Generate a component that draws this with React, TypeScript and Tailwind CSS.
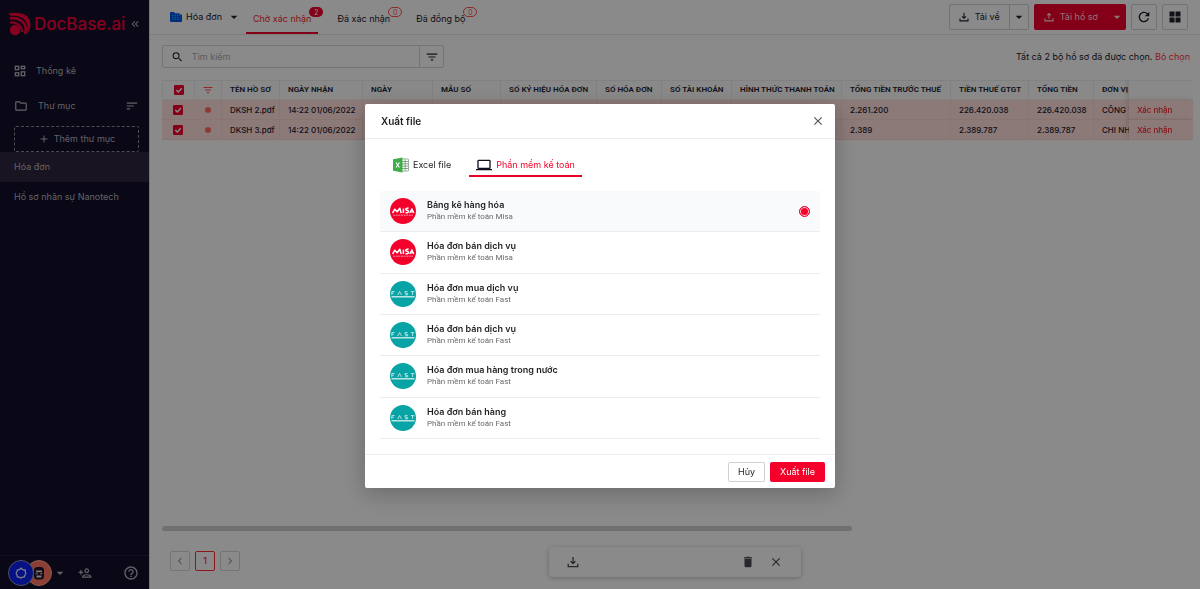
import { useState } from "react";
import type { ReactNode } from "react";
import {
  MdAdd,
  MdArrowDropDown,
  MdClose,
  MdDelete,
  MdFilterList,
  MdHelpOutline,
  MdOutlineFolder,
  MdOutlinePersonAdd,
  MdRefresh,
  MdSearch,
  MdSort,
  MdChevronLeft,
  MdChevronRight,
  MdKeyboardDoubleArrowLeft,
  MdLaptop,
} from "react-icons/md";

function BrandMark() {
  return (
    <svg viewBox="0 0 22 24" className="h-6 w-6 shrink-0" fill="none" aria-hidden="true">
      <circle cx="6" cy="18" r="5.2" fill="#f5003a" />
      <path d="M1 10.500c7-.8 12 3.500 12 9.500" stroke="#f5003a" strokeWidth="2.200" />
      <path d="M1 6.300c9.500-1 15.800 4.200 15.800 11.200 0 2-.5 3.500-1.200 4.500" stroke="#f5003a" strokeWidth="2.600" />
      <path d="M0 2V1h8c8 0 13.500 4.200 13.500 11.500 0 4-1.600 7.500-4.500 10 1.500-3.500 2-6.500 1.200-9.500C16.800 7.500 12 3.800 5 3.800H1.500Z" fill="#f5003a" />
    </svg>
  );
}

function DashboardIcon() {
  return (
    <svg viewBox="0 0 12 12" className="size-3" fill="none" stroke="currentColor" strokeWidth="1.300" aria-hidden="true">
      <rect x="1.300" y="1.300" width="3.400" height="3.400" />
      <rect x="7.300" y="1.300" width="3.400" height="2.400" />
      <rect x="1.300" y="7.800" width="3.400" height="2.900" />
      <rect x="7.300" y="6.800" width="3.400" height="3.900" />
    </svg>
  );
}

function TrayIcon({ className }: { className: string }) {
  return (
    <svg viewBox="0 0 12 12" className={className} fill="none" stroke="currentColor" strokeWidth="1.300" aria-hidden="true">
      <path d="M6 1v6.500M3.600 5.200 6 7.600l2.400-2.400M1.200 7.800v2.800h9.600V7.800" />
    </svg>
  );
}

function UploadIcon({ className }: { className: string }) {
  return (
    <svg viewBox="0 0 12 12" className={className} fill="none" stroke="currentColor" strokeWidth="1.300" aria-hidden="true">
      <path d="M6 8V2M4 3.900l2-2 2 2M1.200 7.500v3.100h9.600V7.500" />
    </svg>
  );
}

function BlueFolder() {
  return (
    <svg viewBox="0 0 12 10" className="h-2.5 w-3" aria-hidden="true">
      <path d="M0 1.200C0 .5.500 0 1.200 0h2.600l1.200 1.200h4.500v1.300H12V9c0 .6-.4 1-1 1H1.200C.5 10 0 9.500 0 8.800Z" fill="#0050e0" />
      <path d="M2 3.300h8.500M2 5.300h8.500M2 7.300h8.500" stroke="#00b4ff" strokeWidth="1" strokeDasharray="1.500 1" />
    </svg>
  );
}

function ExcelIcon() {
  return (
    <svg viewBox="0 0 16 15" className="h-4 w-4" aria-hidden="true">
      <rect x="8" y="1.500" width="7.500" height="12" rx=".6" fill="#fff" stroke="#6f8a74" strokeWidth=".7" />
      <path d="M9 4h6M9 6.300h6M9 8.600h6M9 11h6M12.200 2v11" stroke="#6f8a74" strokeWidth=".8" />
      <path d="M0 1.800 9.500 0v15L0 13.200Z" fill="#3fae49" />
      <path d="m3 5 3.400 5M6.400 5 3 10" stroke="#fff" strokeWidth="1.100" />
    </svg>
  );
}

function MisaLogo() {
  return (
    <svg viewBox="0 0 26 26" className="size-6.5 shrink-0" role="img" aria-label="Misa">
      <circle cx="13" cy="13" r="13" fill="#f3002b" />
      <g fill="none" stroke="#fff" strokeWidth="1.500" strokeLinejoin="round">
        <path d="m2.600 15 2.200-3.800 2.400 2.600 2.600-3.600 1.400 4.800" />
        <path d="M13.400 10.600V15" />
        <path d="M18.600 10c-1.800 0-3 .7-2.800 1.500.2.900 2.700.8 2.700 2.100 0 1-1.500 1.400-3 1.200" />
        <path d="m19.700 15 2.200-4.200 1.900 4.200M20.500 13.800h2.600" strokeWidth="1.300" />
      </g>
      <path d="M3.200 17.200h19.800" stroke="#fff" strokeOpacity=".7" strokeWidth=".8" strokeDasharray="2 .6" />
    </svg>
  );
}

function FastLogo() {
  return (
    <svg viewBox="0 0 26 26" className="size-6.5 shrink-0" role="img" aria-label="Fast">
      <circle cx="13" cy="13" r="13" fill="#08a3a4" />
      <g fill="none" stroke="#d4f3f3" strokeWidth=".8">
        <path d="M1.800 14v-3.500h2.800M1.800 12.200h2" />
        <path d="m7.700 14 1.900-3.500 1.900 3.500" />
        <path d="M17.600 10.600h-2.600v1.400l2.700.6v1.200h-2.900" />
        <path d="M20.800 10.600h3.600M22.600 10.600V14" />
      </g>
      <circle cx="9.600" cy="12.800" r=".7" fill="#f05050" />
      <path d="M1.500 15.800h23" stroke="#fff" strokeOpacity=".85" strokeWidth="1.300" />
    </svg>
  );
}

type Status = { label: string; count: number };
const statuses: Status[] = [
  { label: "Chờ xác nhận", count: 2 },
  { label: "Đã xác nhận", count: 0 },
  { label: "Đã đồng bộ", count: 0 },
];

const columns = [
  { label: "TÊN HỒ SƠ", width: "w-[58px]" },
  { label: "NGÀY NHẬN", width: "w-[83px]" },
  { label: "NGÀY", width: "w-[70px]" },
  { label: "MẪU SỐ", width: "w-[68px]" },
  { label: "SỐ KÝ HIỆU HÓA ĐƠN", width: "w-[96px]" },
  { label: "SỐ HÓA ĐƠN", width: "w-[65px]" },
  { label: "SỐ TÀI KHOẢN", width: "w-[70px]" },
  { label: "HÌNH THỨC THANH TOÁN", width: "w-[110px]" },
  { label: "TỔNG TIỀN TRƯỚC THUẾ", width: "w-[109px]" },
  { label: "TIỀN THUẾ GTGT", width: "w-[78px]" },
  { label: "TỔNG TIỀN", width: "w-[65px]" },
  { label: "ĐƠN VỊ", width: "w-[460px]" },
];

const rows = [
  ["DKSH 2.pdf", "14:22 01/06/2022", "", "", "", "", "", "", "2.261.200", "226.420.038", "226.420.038", "CÔNG T"],
  ["DKSH 3.pdf", "14:22 01/06/2022", "", "", "", "", "", "", "2.389", "2.389.787", "2.389.787", "CHI NHÁ"],
];

const templates = [
  { name: "Bảng kê hàng hóa", vendor: "Misa" },
  { name: "Hóa đơn bán dịch vụ", vendor: "Misa" },
  { name: "Hóa đơn mua dịch vụ", vendor: "Fast" },
  { name: "Hóa đơn bán dịch vụ", vendor: "Fast" },
  { name: "Hóa đơn mua hàng trong nước", vendor: "Fast" },
  { name: "Hóa đơn bán hàng", vendor: "Fast" },
];

function RowCheckbox({ label }: { label: string }) {
  return (
    <label className="relative mx-auto flex size-2.5 items-center justify-center">
      <input type="checkbox" defaultChecked aria-label={label} className="peer size-2.5 appearance-none rounded-[1px] border border-[#f0002c] bg-white checked:bg-[#f0002c]" />
      <svg viewBox="0 0 10 10" className="pointer-events-none absolute inset-0 hidden size-2.5 peer-checked:block" fill="none" stroke="#fff" strokeWidth="1.400" aria-hidden="true">
        <path d="m2.300 5 2 2 3.500-3.800" />
      </svg>
    </label>
  );
}

function Sidebar() {
  return (
    <aside className="flex w-[150px] shrink-0 flex-col border-r border-[#d8d8dc] bg-[#130d28] text-[#b5b4bb]">
      <div className="flex items-center gap-0.5 pt-3 pr-2 pl-2">
        <BrandMark />
        <span className="text-[17px] leading-6 font-medium text-[#f5003a]">DocBase.ai</span>
        <button type="button" aria-label="Thu gọn" className="ml-auto">
          <MdKeyboardDoubleArrowLeft className="size-3" />
        </button>
      </div>
      <nav className="mt-5 flex flex-1 flex-col">
        <a href="#stats" className="flex h-7.5 items-center gap-2.5 px-3.5">
          <DashboardIcon />
          Thống kê
        </a>
        <div className="mt-1 flex h-8 items-center gap-2.5 pr-2.5 pl-3.5">
          <MdOutlineFolder className="size-3.5" />
          <span>Thư mục</span>
          <button type="button" aria-label="Sắp xếp" className="ml-auto">
            <MdSort className="size-3.5" />
          </button>
        </div>
        <button type="button" className="mt-1 mr-2.5 ml-3.5 flex h-6.5 items-center justify-center gap-1 rounded-xs border border-dashed border-[#8d8a94]">
          <MdAdd className="size-3" />
          Thêm thư mục
        </button>
        <a href="#invoices" className="flex h-7.5 items-center bg-[#2f253c] px-3.5">Hóa đơn</a>
        <a href="#hr" className="flex h-7.5 items-center px-3.5">Hồ sơ nhân sự Nanotech</a>
      </nav>
      <div className="flex h-8.5 items-center border-t border-[#241f38] px-2">
        <span className="relative z-10 flex size-6.5 items-center justify-center rounded-full border border-[#8e93b8] bg-[#0b21f0]">
          <svg viewBox="0 0 12 12" className="size-3" fill="none" stroke="#fff" strokeWidth="1.100" strokeLinejoin="round" aria-hidden="true">
            <path d="m6 1 1.500 1.600 2.700.3.100 2.300L11 6.500 9.800 8.200l-.5 1.800-2 .1L6 11.200l-1.600-1.100-2.100-.2-.3-1.900L1 6.300l1-1.500.3-1.900 2.100-.3Z" />
          </svg>
        </span>
        <span className="-ml-2 flex size-6.5 items-center justify-center rounded-full border border-[#ffa08c] bg-[#ff7562]">
          <svg viewBox="0 0 12 14" className="h-3.5 w-3" aria-hidden="true">
            <rect x="1" y="1" width="10" height="12.500" rx="3.500" fill="#1c1028" />
            <path d="M3 4.500h6v1.700H3zM3.500 9.500h5v2h-5z" fill="#f0d8d0" />
            <path d="M2.500 7.800h2.300M7.200 7.800h2.300" stroke="#f0d8d0" />
          </svg>
        </span>
        <button type="button" aria-label="Đổi tài khoản">
          <MdArrowDropDown className="size-4" />
        </button>
        <button type="button" aria-label="Mời thành viên" className="ml-2.5">
          <MdOutlinePersonAdd className="size-3.5" />
        </button>
        <button type="button" aria-label="Trợ giúp" className="mr-0.5 ml-auto">
          <MdHelpOutline className="size-4" />
        </button>
      </div>
    </aside>
  );
}

function TopBar() {
  return (
    <header className="flex h-[35px] items-center border-b border-[#e4e4e4] pr-3 pl-5">
      <button type="button" className="flex items-center gap-1">
        <BlueFolder />
        <span>Hóa đơn</span>
        <MdArrowDropDown className="size-4" />
      </button>
      <nav className="ml-1 flex items-stretch gap-3 self-stretch">
        {statuses.map((s, i) => (
          <a
            key={s.label}
            href="#status"
            className={i === 0 ? "flex items-center border-b-2 border-[#f0002c] px-[7px] pt-1.5 text-[#f5222d]" : "flex items-center border-b-2 border-transparent px-[7px] pt-1.5"}
          >
            <span className="relative">
              {s.label}
              <span
                className={
                  i === 0
                    ? "absolute -top-1.5 left-full -ml-0.5 flex h-2.5 w-3.5 items-center justify-center rounded-full bg-[#f0002c] text-[7px] leading-none text-white"
                    : "absolute -top-1.5 left-full -ml-0.5 flex h-2.5 w-3.5 items-center justify-center rounded-full border border-[#ff4d4f] text-[7px] leading-none text-[#ff4d4f]"
                }
              >
                {s.count}
              </span>
            </span>
          </a>
        ))}
      </nav>
      <div className="ml-auto flex items-center gap-[5px]">
        <div className="flex h-6.5 rounded-xs border border-[#cfcfcf]">
          <button type="button" className="flex items-center gap-1.5 px-[9px]">
            <TrayIcon className="size-2.5" />
            Tải về
          </button>
          <button type="button" aria-label="Tùy chọn tải về" className="border-l border-[#cfcfcf] px-px">
            <MdArrowDropDown className="size-4" />
          </button>
        </div>
        <div className="flex h-6.5 rounded-xs bg-[#f0002c] text-[#ffd6d6]">
          <button type="button" className="flex items-center gap-1.5 px-2.5">
            <UploadIcon className="size-2.5" />
            Tải hồ sơ
          </button>
          <button type="button" aria-label="Tùy chọn tải hồ sơ" className="px-px">
            <MdArrowDropDown className="size-4" />
          </button>
        </div>
        <button type="button" aria-label="Làm mới" className="flex size-6.5 items-center justify-center rounded-xs border border-[#cfcfcf]">
          <MdRefresh className="size-4" />
        </button>
        <button type="button" aria-label="Bố cục" className="flex size-6.5 items-center justify-center rounded-xs border border-[#cfcfcf]">
          <svg viewBox="0 0 12 12" className="size-3" fill="currentColor" aria-hidden="true">
            <path d="M.5.500h5v5h-5zM6.500.500h5v5h-5zM.5 6.500h5v5h-5zM6.500 6.500h5v5h-5z" />
          </svg>
        </button>
      </div>
    </header>
  );
}

function Documents() {
  return (
    <div className="overflow-hidden">
      <table className="w-[1455px] table-fixed border-separate border-spacing-0 text-left text-[8px]">
        <thead className="bg-[#fafafa] font-['Roboto',sans-serif]">
          <tr className="h-5">
            <th className="w-8 border border-r-0 border-[#ececec] p-0"><RowCheckbox label="Chọn tất cả" /></th>
            <th className="w-[27px] border border-r-0 border-[#ececec] p-0"><MdFilterList className="mx-auto size-3 text-[#ff4d4f]" aria-label="Lọc" /></th>
            {columns.map((c) => (
              <th key={c.label} className={`${c.width} truncate border-y border-l border-[#ececec] p-0 pl-2 font-semibold`}>{c.label}</th>
            ))}
            <th className="sticky right-[0px] w-16 border-y border-[#ececec] bg-[#fafafa] p-0 shadow-[-2px_0_5px_rgba(0,0,0,0.12)]" aria-label="Thao tác" />
          </tr>
        </thead>
        <tbody className="font-medium">
          {rows.map((row) => (
            <tr key={row[0]} className="h-5 bg-[#ffdfdb]">
              <td className="border-b border-[#f8d3ce] p-0"><RowCheckbox label={row[0]} /></td>
              <td className="border-b border-[#f8d3ce] p-0"><span className="mx-auto block size-1.5 rounded-full bg-[#ff6b62]" /></td>
              {row.map((cell, i) => (
                <td key={i} className="truncate border-b border-l border-[#f8d3ce] p-0 pl-2">{cell}</td>
              ))}
              <td className="sticky right-[0px] border-b border-[#f8d3ce] bg-[#ffdfdb] p-0 pl-2 shadow-[-2px_0_5px_rgba(0,0,0,0.12)]">
                <button type="button" className="text-[#f5222d]">Xác nhận</button>
              </td>
            </tr>
          ))}
        </tbody>
      </table>
    </div>
  );
}

function PageBox({ children, label, current }: { children: ReactNode; label: string; current?: boolean }) {
  return (
    <button
      type="button"
      aria-label={label}
      className={current ? "flex size-5 items-center justify-center rounded-xs border border-[#ff2d35] font-medium text-[#ff2d35]" : "flex size-5 items-center justify-center rounded-xs border border-[#d4d4d4] text-[#a0a0a0]"}
    >
      {children}
    </button>
  );
}

function ExportDialog() {
  const [selected, setSelected] = useState(0);
  return (
    <div className="fixed inset-0 z-50 flex items-start justify-center bg-black/45 pt-26">
      <section role="dialog" aria-modal="true" aria-labelledby="export-title" className="w-full max-w-[470px] rounded-xs bg-white text-[#1f1f1f] shadow-[0_6px_24px_rgba(0,0,0,0.25)]">
        <header className="flex h-[35px] items-center justify-between border-b border-[#ececec] px-4">
          <h2 id="export-title" className="text-[10px] font-semibold">Xuất file</h2>
          <button type="button" aria-label="Đóng" className="-mr-1.5">
            <MdClose className="size-3.5 text-[#555]" />
          </button>
        </header>
        <div className="px-[15px] pt-4 pb-[15px]">
          <div role="tablist" className="flex gap-3 px-[7px]">
            <button role="tab" type="button" aria-selected="false" className="flex h-[22px] items-center gap-1 border-b-2 border-transparent px-1.5">
              <ExcelIcon />
              Excel file
            </button>
            <button role="tab" type="button" aria-selected="true" className="flex h-[22px] items-center gap-1 border-b-2 border-[#e8002b] px-[7px] text-[#f3002b]">
              <MdLaptop className="size-4 text-[#12101f]" />
              Phần mềm kế toán
            </button>
          </div>
          <div className="mt-3.5 grid h-62 grid-rows-6">
            {templates.map((t, i) => (
              <label key={i} className={i === selected ? "flex items-center gap-[11px] border-b border-[#ececec] bg-[#f9fafc] px-2.5" : "flex items-center gap-[11px] border-b border-[#ececec] px-2.5"}>
                {t.vendor === "Misa" ? <MisaLogo /> : <FastLogo />}
                <span className="flex flex-1 flex-col">
                  <span className="text-[9px] leading-3 font-semibold">{t.name}</span>
                  <span className="font-['Roboto',sans-serif] text-[8px] leading-3 text-[#6b6b6b]">Phần mềm kế toán {t.vendor}</span>
                </span>
                <input
                  type="radio"
                  name="template"
                  checked={i === selected}
                  onChange={() => setSelected(i)}
                  className="size-[11px] appearance-none rounded-full checked:border checked:border-[#f3002b] checked:bg-[#f3002b] checked:shadow-[inset_0_0_0_1px_#ffd0d6]"
                />
              </label>
            ))}
          </div>
        </div>
        <footer className="flex h-[34px] items-center justify-end gap-[5px] border-t border-[#ececec] px-2.5">
          <button type="button" className="h-5 rounded-xs border border-[#d0d0d0] px-[9px]">Hủy</button>
          <button type="button" className="h-5 rounded-xs bg-[#f3002b] px-2.5 text-white">Xuất file</button>
        </footer>
      </section>
    </div>
  );
}

export default function App() {
  return (
    <div className="flex min-h-screen bg-[#fcfcfc] font-['Inter',sans-serif] text-[9px] leading-3 text-[#22202f]">
      <Sidebar />
      <main className="relative flex min-w-0 flex-1 flex-col">
        <TopBar />
        <div className="flex items-center justify-between pt-2.5 pr-2.5 pl-3">
          <div className="flex h-[23px] w-[282px] items-center rounded-xs border border-[#d4d4d4]">
            <label className="flex flex-1 items-center gap-2 pl-2">
              <MdSearch className="size-3.5" />
              <input type="search" placeholder="Tìm kiếm" aria-label="Tìm kiếm" className="w-full outline-none placeholder:text-[#a8a8a8]" />
            </label>
            <button type="button" aria-label="Bộ lọc" className="flex h-full w-6 items-center justify-center border-l border-[#d4d4d4]">
              <MdFilterList className="size-3.5" />
            </button>
          </div>
          <p>
            Tất cả 2 bộ hồ sơ đã được chọn. <button type="button" className="text-[#ff2d35]">Bỏ chọn</button>
          </p>
        </div>
        <div className="mt-3 mr-[7px] ml-3">
          <Documents />
        </div>
        <div className="mt-auto mr-2 ml-3">
          <div className="h-[5px] w-[67%] rounded-full bg-[#cfcbcd]" />
          <div className="flex gap-[5px] px-2 pt-5 pb-4.5">
            <PageBox label="Trang trước"><MdChevronLeft className="size-3.5" /></PageBox>
            <PageBox label="Trang 1" current>1</PageBox>
            <PageBox label="Trang sau"><MdChevronRight className="size-3.5" /></PageBox>
          </div>
        </div>
        <div className="absolute bottom-3 left-1/2 flex h-7.5 w-63 -translate-x-1/2 items-center rounded-sm bg-[#fcfcfc] px-4.5 text-[#4b4850] shadow-[0_1px_5px_rgba(0,0,0,0.25)]">
          <button type="button" aria-label="Tải xuống"><TrayIcon className="size-3" /></button>
          <button type="button" aria-label="Xóa" className="ml-auto"><MdDelete className="size-3.5" /></button>
          <button type="button" aria-label="Bỏ chọn tất cả" className="ml-3.5"><MdClose className="size-3.5" /></button>
        </div>
      </main>
      <ExportDialog />
    </div>
  );
}
